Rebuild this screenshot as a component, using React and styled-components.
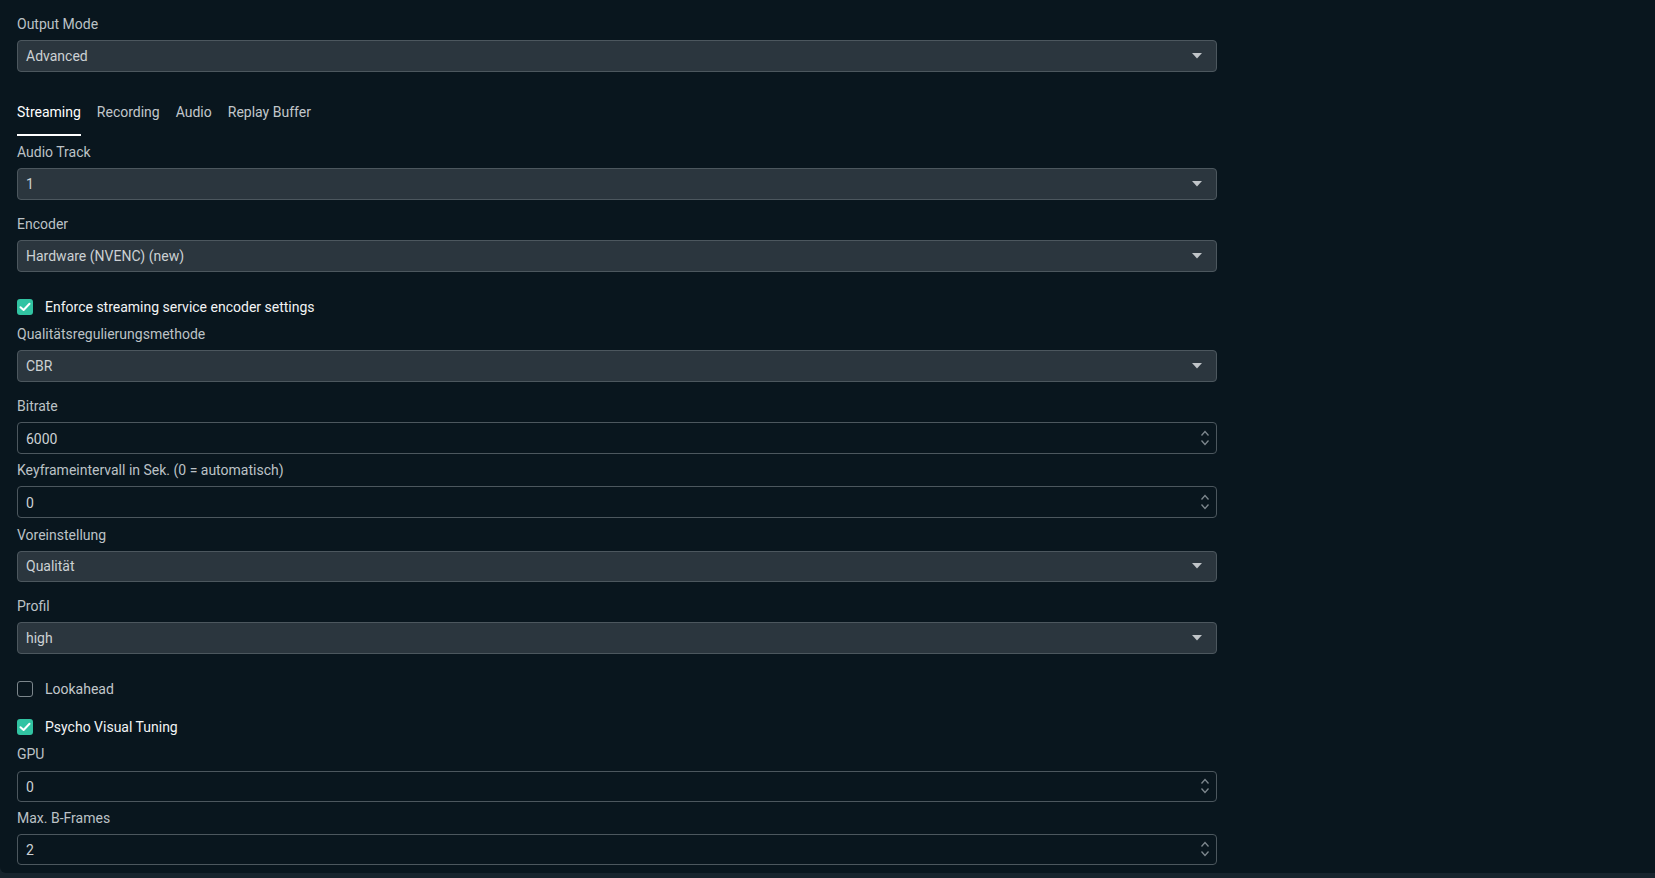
import React from 'react';
import styled, { createGlobalStyle } from 'styled-components';

const Global = createGlobalStyle`
  html, body {
    margin: 0;
    padding: 0;
    background: #17242d;
    font-family: Roboto, "Noto Sans", sans-serif;
    font-size: 14px;
  }
`;

const Panel = styled.div`
  box-sizing: border-box;
  width: 1655px;
  height: 873px;
  background: #09161e;
  border-radius: 0 0 0 6px;
  padding: 16px 0 0 17px;
  display: flex;
  flex-direction: column;
  align-items: flex-start;
`;

const Label = styled.div`
  color: #bcc2c6;
  line-height: 16px;
  height: 16px;
  margin-top: ${(p) => p.$mt || 0}px;
`;

const Box = styled.div`
  box-sizing: border-box;
  width: 1200px;
  height: 31.5px;
  margin-top: ${(p) => p.$mt || 0}px;
  border: 1px solid #4c575e;
  border-radius: 4px;
  background: ${(p) => (p.$number ? 'transparent' : '#2b363e')};
  display: flex;
  align-items: center;
  justify-content: space-between;
  padding: 0 ${(p) => (p.$number ? 6 : 14)}px 0 8px;
  color: #ccd1d4;
`;

const Value = styled.span`
  padding-top: ${(p) => (p.$number ? 2 : 0)}px;
`;

const Tabs = styled.div`
  display: flex;
  gap: 16px;
  margin-top: 32.5px;
`;

const Tab = styled.div`
  line-height: 16px;
  padding-bottom: 14px;
  border-bottom: 2px solid ${(p) => (p.$active ? '#ffffff' : 'transparent')};
  color: ${(p) => (p.$active ? '#ffffff' : '#c2c7cb')};
`;

const CheckRow = styled.div`
  display: flex;
  align-items: center;
  gap: 12px;
  height: 16px;
  margin-top: ${(p) => p.$mt || 0}px;
  color: ${(p) => (p.$on ? '#f2f4f5' : '#c2c7cb')};
  line-height: 16px;
`;

const Check = styled.span`
  box-sizing: border-box;
  width: 16px;
  height: 16px;
  border-radius: 3px;
  display: inline-flex;
  align-items: center;
  justify-content: center;
  background: ${(p) => (p.$on ? '#31c3a2' : 'transparent')};
  border: ${(p) => (p.$on ? 'none' : '1px solid #7c868c')};
`;

const Caret = () => (
  <svg width="10" height="6" viewBox="0 0 10 6">
    <path d="M0 0 H10 L5 5.5 Z" fill="#c0c5c8" />
  </svg>
);

const Spin = () => (
  <svg width="10" height="18" viewBox="0 0 10 18">
    <path d="M1.5 6.5 L5 2.5 L8.5 6.5" fill="none" stroke="#7d878d" strokeWidth="1.3" />
    <path d="M1.5 11.5 L5 15.5 L8.5 11.5" fill="none" stroke="#7d878d" strokeWidth="1.3" />
  </svg>
);

const Tick = () => (
  <svg width="12" height="10" viewBox="0 0 12 10">
    <path d="M1.5 5.2 L4.6 8 L10.5 1.8" fill="none" stroke="#ffffff" strokeWidth="2" strokeLinecap="round" strokeLinejoin="round" />
  </svg>
);

const Select = ({ value, mt }) => (
  <Box $mt={mt}>
    <Value>{value}</Value>
    <Caret />
  </Box>
);

const Number = ({ value, mt }) => (
  <Box $mt={mt} $number>
    <Value $number>{value}</Value>
    <Spin />
  </Box>
);

const Checkbox = ({ label, on, mt }) => (
  <CheckRow $mt={mt} $on={on}>
    <Check $on={on}>{on && <Tick />}</Check>
    {label}
  </CheckRow>
);

export default function App() {
  return (
    <>
      <Global />
      <Panel>
        <Label>Output Mode</Label>
        <Select value="Advanced" mt={8} />

        <Tabs>
          <Tab $active>Streaming</Tab>
          <Tab>Recording</Tab>
          <Tab>Audio</Tab>
          <Tab>Replay Buffer</Tab>
        </Tabs>

        <Label $mt={7.5}>Audio Track</Label>
        <Select value="1" mt={8.5} />

        <Label $mt={16}>Encoder</Label>
        <Select value="Hardware (NVENC) (new)" mt={8.5} />

        <Checkbox label="Enforce streaming service encoder settings" on mt={27.5} />

        <Label $mt={10.5}>Qualitätsregulierungsmethode</Label>
        <Select value="CBR" mt={8.5} />

        <Label $mt={16}>Bitrate</Label>
        <Number value="6000" mt={8.5} />

        <Label $mt={8.5}>Keyframeintervall in Sek. (0 = automatisch)</Label>
        <Number value="0" mt={8} />

        <Label $mt={9}>Voreinstellung</Label>
        <Select value="Qualität" mt={8} />

        <Label $mt={16}>Profil</Label>
        <Select value="high" mt={8} />

        <Checkbox label="Lookahead" mt={27.5} />
        <Checkbox label="Psycho Visual Tuning" on mt={22} />

        <Label $mt={10.5}>GPU</Label>
        <Number value="0" mt={9} />

        <Label $mt={7.5}>Max. B-Frames</Label>
        <Number value="2" mt={8} />
      </Panel>
    </>
  );
}
